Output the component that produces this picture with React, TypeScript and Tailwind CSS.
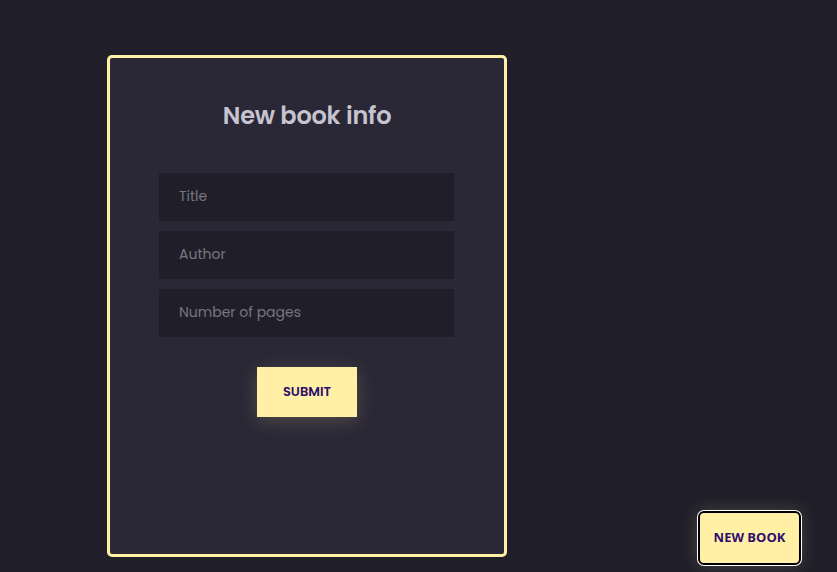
export default function App() {
  const font = { fontFamily: "Poppins, Inter, 'Noto Sans', sans-serif" };
  return (
    <div className="relative min-h-screen w-full bg-[#201f29] pt-[55px] pl-[107px]" style={font}>
      <form className="flex h-[502px] w-[400px] flex-col items-center rounded-[5px] border-[3px] border-[#fff0a6] bg-[#2a2836]">
        <h1 className="mt-[42px] text-[24px] font-semibold leading-[32px] tracking-[-0.2px] text-[#c5c4cf]">
          New book info
        </h1>
        <div className="mt-[41px] ml-[49px] flex w-[295px] flex-col gap-[10px] self-start">
          <input
            placeholder="Title"
            className="h-[48px] w-full bg-[#201f29] px-[20px] pb-[2px] text-[14px] text-[#c5c4cf] outline-none placeholder:text-[#77767f]"
          />
          <input
            placeholder="Author"
            className="h-[48px] w-full bg-[#201f29] px-[20px] pb-[2px] text-[14px] text-[#c5c4cf] outline-none placeholder:text-[#77767f]"
          />
          <input
            placeholder="Number of pages"
            className="h-[48px] w-full bg-[#201f29] px-[20px] pb-[2px] text-[14px] text-[#c5c4cf] outline-none placeholder:text-[#77767f]"
          />
        </div>
        <button
          type="button"
          className="mt-[30px] h-[50px] w-[100px] bg-[#fff0a6] text-[13px] font-semibold text-[#2a0f6a] shadow-[0_4px_18px_rgba(255,240,166,0.18)]"
        >
          SUBMIT
        </button>
      </form>

      <button
        type="button"
        className="absolute bottom-[7px] right-[36px] h-[54px] w-[103px] rounded-[6px] border-2 border-black bg-[#fff0a6] text-[13px] font-bold text-[#2f0c6e] shadow-[0_0_0_1px_#ffffff,0_0_18px_rgba(255,240,166,0.2)]"
        style={{ fontFamily: "'Open Sans', sans-serif" }}
      >
        NEW BOOK
      </button>
    </div>
  );
}
